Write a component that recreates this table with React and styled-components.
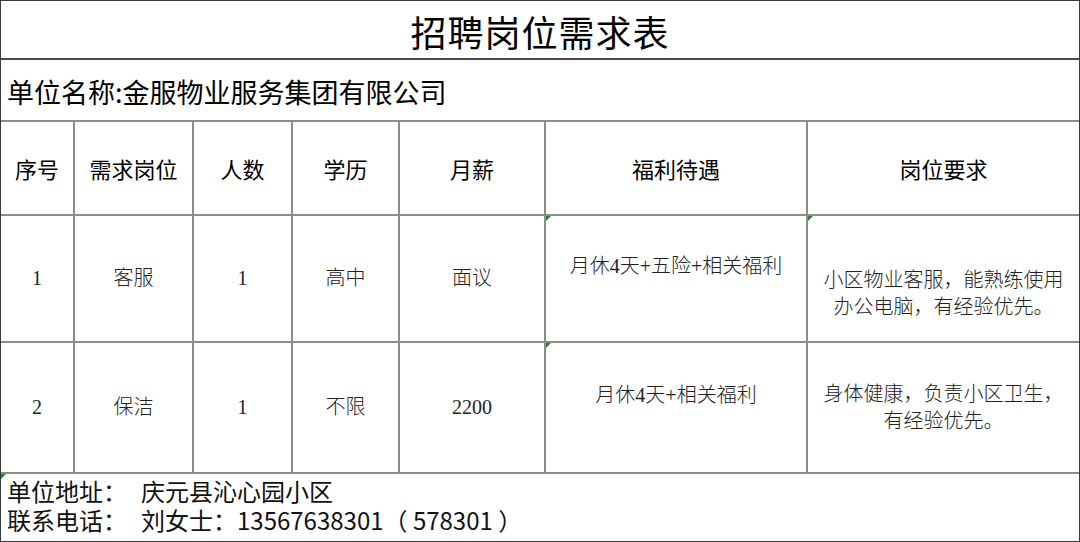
import React from "react";
import styled, { createGlobalStyle } from "styled-components";

const Global = createGlobalStyle`
  * { box-sizing: border-box; }
  body {
    margin: 0;
    background: #fff;
    font-family: "Noto Sans CJK SC", "Noto Sans", sans-serif;
  }
`;

const Sheet = styled.div`
  width: 1080px;
  height: 542px;
  border: 1px solid #3a3a3a;
  display: flex;
  flex-direction: column;
  overflow: hidden;
  color: #111;
`;

const Title = styled.div`
  height: 59px;
  border-bottom: 2px solid #4a4a4a;
  display: flex;
  align-items: center;
  justify-content: center;
  font-size: 36px;
  font-weight: 400;
  letter-spacing: 1px;
  padding-top: 2px;
  color: #000;
`;

const Company = styled.div`
  height: 62px;
  border-bottom: 2px solid #8c8c8c;
  display: flex;
  align-items: center;
  padding-left: 6px;
  font-size: 27px;
  font-weight: 400;
  padding-top: 2px;
  color: #000;
`;

const Grid = styled.div`
  display: grid;
  grid-template-columns: 74px 119px 99px 107px 146px 262px 1fr;
  grid-template-rows: 94px 127px 131px;
`;

const Cell = styled.div`
  position: relative;
  border-right: 2px solid #8c8c8c;
  border-bottom: 2px solid #8c8c8c;
  &:nth-child(7n) { border-right: none; }
  display: flex;
  align-items: center;
  justify-content: center;
  text-align: center;
  padding: ${(p) =>
    p.$lift ? "0 6px 24px" : p.$drop ? "30px 6px 0" : "0 6px"};
  font-family: ${(p) =>
    p.$head
      ? `"Noto Sans CJK SC", sans-serif`
      : `"Liberation Serif", "Noto Sans CJK SC", serif`};
  font-size: ${(p) => (p.$head ? "22px" : "20px")};
  font-weight: ${(p) => (p.$head ? 400 : 300)};
  color: ${(p) => (p.$head ? "#000" : "#222")};
  line-height: 27px;
`;

const Marker = styled.span`
  position: absolute;
  left: 0;
  top: 0;
  width: 0;
  height: 0;
  border-top: 5px solid #1f8a2a;
  border-right: 5px solid transparent;
`;

const Footer = styled.div`
  position: relative;
  flex: 1;
  padding: 2px 0 0 6px;
  font-size: 24px;
  font-weight: 400;
  line-height: 29px;
  color: #111;
`;

const Line = styled.div`
  display: flex;
  white-space: nowrap;
`;

const Label = styled.span`
  flex: 0 0 134px;
`;

const heads = ["序号", "需求岗位", "人数", "学历", "月薪", "福利待遇", "岗位要求"];

const rows = [
  {
    no: "1",
    job: "客服",
    count: "1",
    edu: "高中",
    pay: "面议",
    welfare: "月休4天+五险+相关福利",
    req: "小区物业客服，能熟练使用办公电脑，有经验优先。",
  },
  {
    no: "2",
    job: "保洁",
    count: "1",
    edu: "不限",
    pay: "2200",
    welfare: "月休4天+相关福利",
    req: "身体健康，负责小区卫生，有经验优先。",
  },
];

export default function App() {
  return (
    <>
      <Global />
      <Sheet>
        <Title>招聘岗位需求表</Title>
        <Company>单位名称:金服物业服务集团有限公司</Company>
        <Grid>
          {heads.map((h) => (
            <Cell key={h} $head>
              {h}
            </Cell>
          ))}
          {rows.map((r) => (
            <React.Fragment key={r.no}>
              <Cell>{r.no}</Cell>
              <Cell>{r.job}</Cell>
              <Cell>{r.count}</Cell>
              <Cell>{r.edu}</Cell>
              <Cell>{r.pay}</Cell>
              <Cell $lift>
                <Marker />
                {r.welfare}
              </Cell>
              <Cell $drop={r.no === "1"}>
                {r.no === "1" && <Marker />}
                {r.req}
              </Cell>
            </React.Fragment>
          ))}
        </Grid>
        <Footer>
          <Marker />
          <Line>
            <Label>单位地址：</Label>
            <span>庆元县沁心园小区</span>
          </Line>
          <Line>
            <Label>联系电话：</Label>
            <span>刘女士：13567638301（ 578301 ）</span>
          </Line>
        </Footer>
      </Sheet>
    </>
  );
}
